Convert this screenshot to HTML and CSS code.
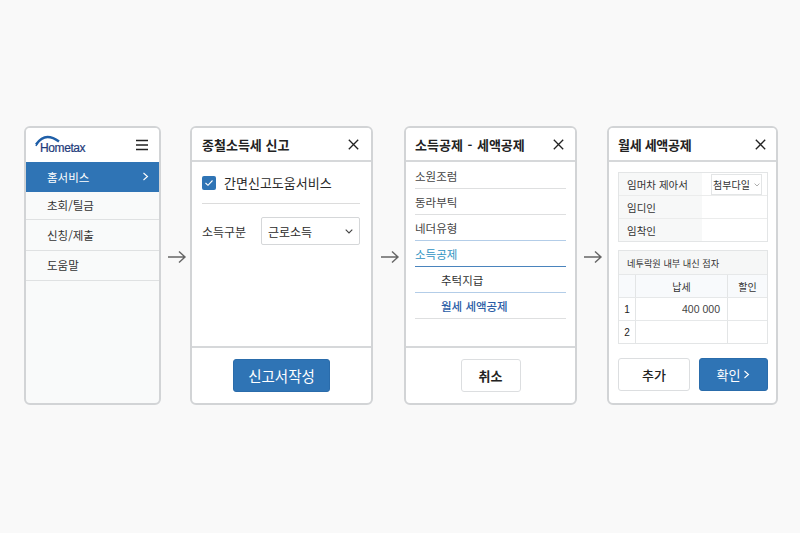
FILE: index.html
```html
<!DOCTYPE html>
<html lang="ko">
<head>
<meta charset="utf-8">
<title>Hometax</title>
<link rel="stylesheet" href="styles.css">
</head>
<body>
<main class="flow">
  <section class="panel p1">
    <header class="head logo-head">
      <div class="logo">
        <svg class="logo-arch" width="26" height="12" viewBox="0 0 26 12"><path d="M1 9.5 C5 4 8 2 12.5 2 C17 2 20 3.5 24 6.5" fill="none" stroke="#1f5fa8" stroke-width="2.4"/><path d="M3 7 L1 11" stroke="#1f5fa8" stroke-width="1.6"/></svg>
        <span class="logo-text">Hometax</span>
      </div>
      <svg width="14" height="12" viewBox="0 0 14 12"><path d="M1 1.5H13M1 6H13M1 10.5H13" stroke="#222" stroke-width="1.7"/></svg>
    </header>
    <nav class="menu">
      <div class="menu-item active"><span>홈서비스</span><svg width="7" height="9" viewBox="0 0 7 9"><path d="M1.5 1L5.5 4.5L1.5 8" fill="none" stroke="#fff" stroke-width="1.1"/></svg></div>
      <div class="menu-item h28">초회/틸금</div>
      <div class="menu-item h31">신칭/제출</div>
      <div class="menu-item h30">도움말</div>
    </nav>
  </section>

  <div class="arrow a1"><svg width="20" height="14" viewBox="0 0 20 14"><path d="M1 7H18M12 1.5L18 7L12 12.5" fill="none" stroke="#666" stroke-width="1.4"/></svg></div>

  <section class="panel p2">
    <header class="head"><h2>종철소득세 신고</h2><svg class="x" width="11" height="11" viewBox="0 0 11 11"><path d="M.8.8L10.2 10.2M10.2.8L.8 10.2" stroke="#222" stroke-width="1.3"/></svg></header>
    <div class="body form">
      <label class="check-row">
        <span class="check"><svg width="10" height="8" viewBox="0 0 10 8"><path d="M1.5 4L4 6.3L8.5 1.5" fill="none" stroke="#fff" stroke-width="1.1"/></svg></span>
        간면신고도움서비스
      </label>
      <div class="field">
        <span class="field-label">소득구분</span>
        <div class="select"><span>근로소득</span><svg width="8" height="5" viewBox="0 0 8 5"><path d="M.7.7L4 4L7.3.7" fill="none" stroke="#444" stroke-width="1.1"/></svg></div>
      </div>
    </div>
    <footer class="foot"><button class="btn primary wide">신고서작성</button></footer>
  </section>

  <div class="arrow a2"><svg width="20" height="14" viewBox="0 0 20 14"><path d="M1 7H18M12 1.5L18 7L12 12.5" fill="none" stroke="#666" stroke-width="1.4"/></svg></div>

  <section class="panel p3">
    <header class="head"><h2 class="wide-dash">소득공제 - 세액공제</h2><svg class="x" width="11" height="11" viewBox="0 0 11 11"><path d="M.8.8L10.2 10.2M10.2.8L.8 10.2" stroke="#222" stroke-width="1.3"/></svg></header>
    <div class="body list">
      <div class="row">소원조럼</div>
      <div class="row">동라부틱</div>
      <div class="row line-light">네더유형</div>
      <div class="row teal line-blue">소득공제</div>
      <div class="row sub line-light">추턱지급</div>
      <div class="row sub current">월세 세액공제</div>
    </div>
    <footer class="foot"><button class="btn plain cancel">취소</button></footer>
  </section>

  <div class="arrow a3"><svg width="20" height="14" viewBox="0 0 20 14"><path d="M1 7H18M12 1.5L18 7L12 12.5" fill="none" stroke="#666" stroke-width="1.4"/></svg></div>

  <section class="panel p4">
    <header class="head"><h2>월세 세액공제</h2><svg class="x" width="11" height="11" viewBox="0 0 11 11"><path d="M.8.8L10.2 10.2M10.2.8L.8 10.2" stroke="#222" stroke-width="1.3"/></svg></header>
    <div class="body detail">
      <div class="info">
        <div class="info-row"><span class="info-key">임머차 제아서</span><span class="info-val"><span class="attach">첨부다일<svg width="6" height="4" viewBox="0 0 6 4"><path d="M.6.6L3 3L5.4.6" fill="none" stroke="#999" stroke-width=".8"/></svg></span></span></div>
        <div class="info-row"><span class="info-key">임디인</span><span class="info-val"></span></div>
        <div class="info-row"><span class="info-key">임착인</span><span class="info-val"></span></div>
      </div>
      <div class="grid-table">
        <div class="caption">네투락원 내부 내신 점자</div>
        <div class="cells head-cells"><span></span><span>납세</span><span>할인</span></div>
        <div class="cells"><span class="num">1</span><span class="amount">400 000</span><span></span></div>
        <div class="cells"><span class="num">2</span><span></span><span></span></div>
      </div>
      <div class="actions">
        <button class="btn plain add">추가</button>
        <button class="btn primary ok">확인 <svg width="7" height="9" viewBox="0 0 7 9"><path d="M1.5 1L5.5 4.5L1.5 8" fill="none" stroke="#fff" stroke-width="1.1"/></svg></button>
      </div>
    </div>
  </section>
</main>
</body>
</html>
```

FILE: styles.css
```css
* { box-sizing: border-box; }
html, body { margin: 0; height: 100%; }
body {
  width: 800px;
  height: 533px;
  overflow: hidden;
  background: #f9f9f9;
  color: #2b2b2b;
  font-family: "Noto Sans CJK KR", "Noto Sans", sans-serif;
}
.flow {
  display: flex;
  align-items: flex-start;
  padding: 126px 0 0 24px;
}
.panel {
  height: 279px;
  background: #fff;
  border: 2px solid #d2d4d6;
  border-radius: 6px;
  display: flex;
  flex-direction: column;
  overflow: hidden;
  flex: none;
}
.p1 { width: 137px; background: #f9fafa; }
.p2 { width: 183px; }
.p3 { width: 173px; }
.p4 { width: 171px; }

.arrow {
  flex: none;
  height: 279px;
  display: flex;
  align-items: center;
  justify-content: center;
}
.arrow svg { position: relative; top: -9px; left: 1px; }
.a1 { width: 29px; }
.a2 { width: 31px; }
.a3 { width: 30px; }

.head {
  height: 34px;
  flex: none;
  display: flex;
  align-items: center;
  justify-content: space-between;
  padding: 0 12px 0 10px;
  background: #fff;
  border-bottom: 2px solid #d6d8da;
}
.head h2 { margin: 0; font-size: 13px; font-weight: 700; color: #222; }
.wide-dash { word-spacing: 1px; }
.p3 .head { padding: 0 11px 0 9px; }
.p4 .head { padding: 0 10px 0 9px; }
.p4 .head h2 { letter-spacing: -.3px; }
.logo-head { padding: 0 10px 0 8px; border-bottom: 0; }

.logo { position: relative; width: 60px; height: 26px; }
.logo-arch { position: absolute; left: 1px; top: 3px; }
.logo-text {
  position: absolute;
  left: 6px;
  top: 8px;
  font: 12px/16px "Liberation Sans", sans-serif;
  letter-spacing: -.4px;
  color: #1d3a7a;
  -webkit-text-stroke: .2px #1d3a7a;
}

.menu-item {
  display: flex;
  align-items: center;
  justify-content: space-between;
  padding: 0 10px 1px 21px;
  font-size: 11.5px;
  color: #333;
  border-bottom: 1px solid #dfe1e2;
}
.menu-item.active { height: 30px; background: #2f74b5; color: #fff; border: 0; }
.h28 { height: 28px; }
.h31 { height: 31px; }
.h30 { height: 30px; }

.body { flex: 1; min-height: 0; }
.form { padding: 0 11px 0 10px; }
.check-row {
  display: flex;
  align-items: center;
  gap: 8px;
  height: 42px;
  border-bottom: 1px solid #dcdcdc;
  font-size: 13px;
  color: #2a2a2a;
}
.check {
  width: 14px;
  height: 14px;
  border-radius: 2px;
  background: #2f74b5;
  display: flex;
  align-items: center;
  justify-content: center;
}
.field { display: flex; align-items: center; margin-top: 13px; font-size: 12px; color: #333; }
.field-label { width: 59px; flex: none; }
.select {
  width: 99px;
  height: 28px;
  border: 1px solid #d5d7d9;
  border-radius: 2px;
  display: flex;
  align-items: center;
  justify-content: space-between;
  padding: 0 6px 0 6px;
  color: #2a2a2a;
}
.foot {
  height: 57px;
  flex: none;
  border-top: 2px solid #d6d8da;
  display: flex;
  justify-content: center;
  padding-top: 11px;
}
.btn {
  font-family: inherit;
  border-radius: 3px;
  display: flex;
  align-items: center;
  justify-content: center;
  gap: 3px;
  padding: 0;
  height: 33px;
}
.primary { background: #2f74b5; border: 1px solid #2a6cab; color: #fff; }
.plain { background: #fff; border: 1px solid #dcdee0; color: #222; font-weight: 500; }
.wide { width: 97px; font-size: 14.5px; }
.cancel { width: 60px; font-size: 13px; font-weight: 700; }

.list { padding: 1px 9px 0; }
.row {
  height: 26px;
  display: flex;
  align-items: center;
  font-size: 11.5px;
  color: #444;
  border-bottom: 1px solid #dedfe0;
}
.line-light { border-bottom-color: #b3cde8; }
.line-blue { border-bottom-color: #4a84bd; }
.teal { color: #2f93c2; }
.sub { padding-left: 26px; color: #333; }
.current { color: #2b5da6; font-weight: 500; }

.detail { padding: 10px 8px 0 9px; }
.info { border: 1px solid #e3e5e6; height: 70px; }
.info-row { height: 23px; display: flex; border-bottom: 1px solid #ebecec; font-size: 10.5px; color: #333; }
.info-row:last-child { border-bottom: 0; height: 22px; }
.info-key { width: 83px; flex: none; background: #f7f8f8; padding-left: 8px; display: flex; align-items: center; }
.info-val { flex: 1; position: relative; display: flex; align-items: center; }
.attach {
  position: absolute;
  left: 9px;
  top: 1px;
  width: 51px;
  height: 21px;
  border: 1px solid #e3e5e6;
  background: #fff;
  display: flex;
  align-items: center;
  justify-content: center;
  gap: 4px;
  font-size: 10px;
}
.grid-table { margin-top: 8px; border: 1px solid #e3e5e6; height: 94px; }
.caption {
  height: 23px;
  background: #f6f7f7;
  font-size: 9.2px;
  padding-left: 8px;
  display: flex;
  align-items: center;
  color: #333;
}
.cells {
  display: grid;
  grid-template-columns: 16px 92px 1fr;
  height: 23px;
  border-top: 1px solid #e6e8e9;
  font-size: 10px;
  color: #333;
}
.cells span { display: flex; align-items: center; justify-content: center; }
.cells span + span { border-left: 1px solid #e3e5e6; }
.head-cells { background: #f8fafc; }
.num { font: 10px "Liberation Sans", sans-serif; color: #222; }
.cells .amount { justify-content: flex-end; padding-right: 7px; font: 10.5px "Liberation Sans", sans-serif; color: #444; }
.actions { display: flex; justify-content: space-between; margin-top: 14px; }
.add { width: 72px; font-size: 13px; }
.ok { width: 69px; font-size: 13px; }
```
